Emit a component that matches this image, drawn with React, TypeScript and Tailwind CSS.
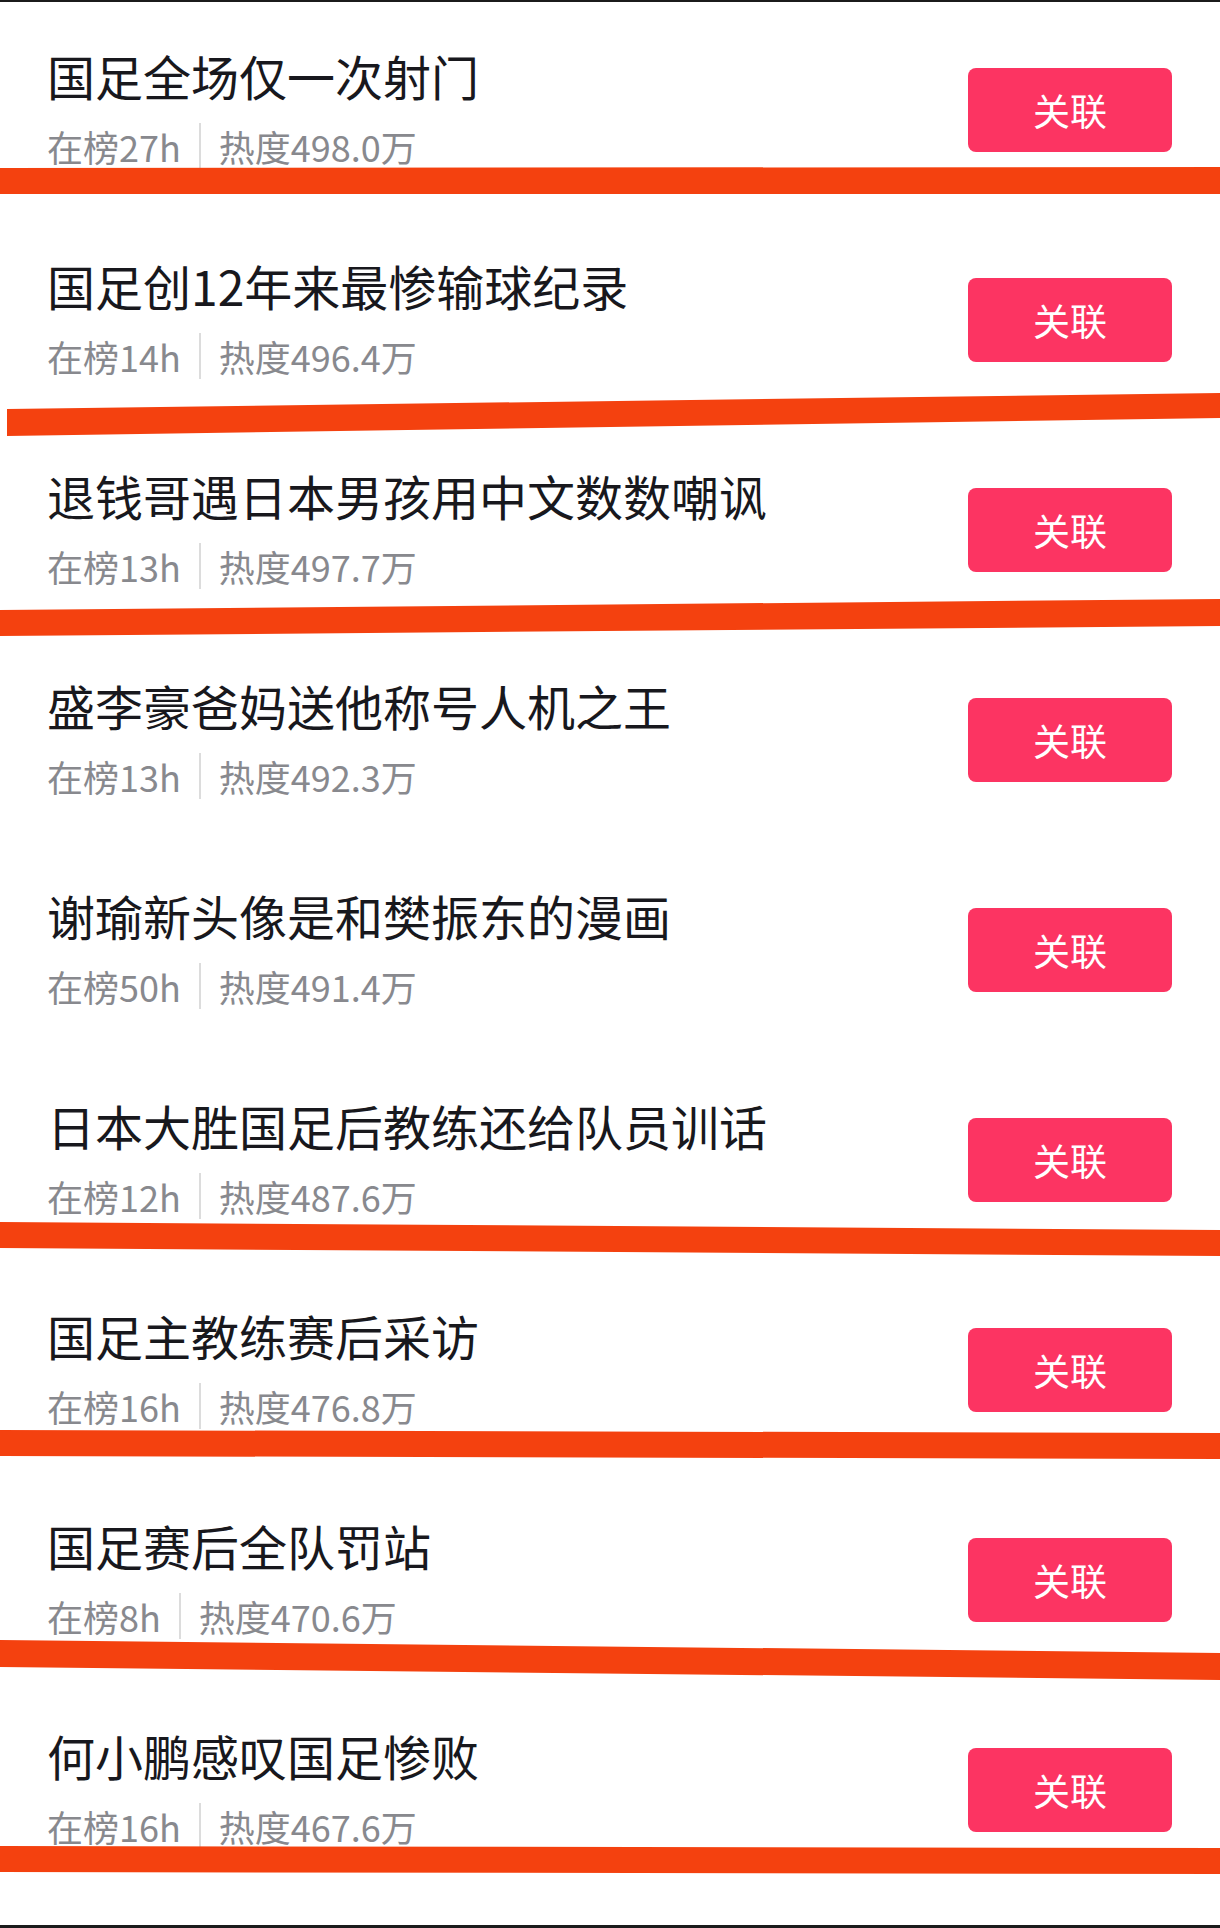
import React from "react";

const rows = [
  { title: "国足全场仅一次射门", time: "在榜27h", heat: "热度498.0万" },
  { title: "国足创12年来最惨输球纪录", time: "在榜14h", heat: "热度496.4万" },
  { title: "退钱哥遇日本男孩用中文数数嘲讽", time: "在榜13h", heat: "热度497.7万" },
  { title: "盛李豪爸妈送他称号人机之王", time: "在榜13h", heat: "热度492.3万" },
  { title: "谢瑜新头像是和樊振东的漫画", time: "在榜50h", heat: "热度491.4万" },
  { title: "日本大胜国足后教练还给队员训话", time: "在榜12h", heat: "热度487.6万" },
  { title: "国足主教练赛后采访", time: "在榜16h", heat: "热度476.8万" },
  { title: "国足赛后全队罚站", time: "在榜8h", heat: "热度470.6万" },
  { title: "何小鹏感叹国足惨败", time: "在榜16h", heat: "热度467.6万" },
];

// annotation strokes: [xLeft, leftTop, leftBottom, rightTop, rightBottom]
const strokes: [number, number, number, number, number][] = [
  [0, 168, 194, 167, 194],
  [7, 409, 436, 393, 418],
  [0, 610, 636, 599, 626],
  [0, 1222, 1248, 1230, 1256],
  [0, 1430, 1456, 1433, 1459],
  [0, 1640, 1667, 1653, 1680],
  [0, 1846, 1872, 1848, 1874],
];

export default function App() {
  return (
    <div
      className="relative w-[1220px] h-[1928px] bg-white border-t-2 border-b-[3px] border-[#1b1b1b] overflow-hidden"
      style={{ fontFamily: '"Noto Sans CJK SC", "Noto Sans", sans-serif' }}
    >
      <div className="flex flex-col pt-[3px]">
        {rows.map((r, i) => (
          <div key={i} className="flex justify-between h-[210px] pl-[47px] pr-[48px]">
            <div className="flex flex-col pt-[40px]">
              <div className="text-[48px] leading-[60px] text-[#18181d]">{r.title}</div>
              <div className="mt-[18px] flex items-center gap-[18px] text-[36px] leading-[46px] text-[#88898e]">
                <span>{r.time}</span>
                <span className="w-[2px] h-[46px] bg-[#dcdcdc]" />
                <span>{r.heat}</span>
              </div>
            </div>
            <div className="self-center w-[204px] h-[84px] rounded-[8px] bg-[#fc3462] flex items-center justify-center text-white text-[37px] leading-none">
              关联
            </div>
          </div>
        ))}
      </div>
      <svg
        className="absolute left-0 top-[-2px] pointer-events-none"
        width="1220"
        height="1928"
        viewBox="0 0 1220 1928"
      >
        {strokes.map(([x, lt, lb, rt, rb], i) => (
          <polygon
            key={i}
            points={`${x},${lt} 1220,${rt} 1220,${rb} ${x},${lb}`}
            fill="#f4410f"
          />
        ))}
      </svg>
    </div>
  );
}
